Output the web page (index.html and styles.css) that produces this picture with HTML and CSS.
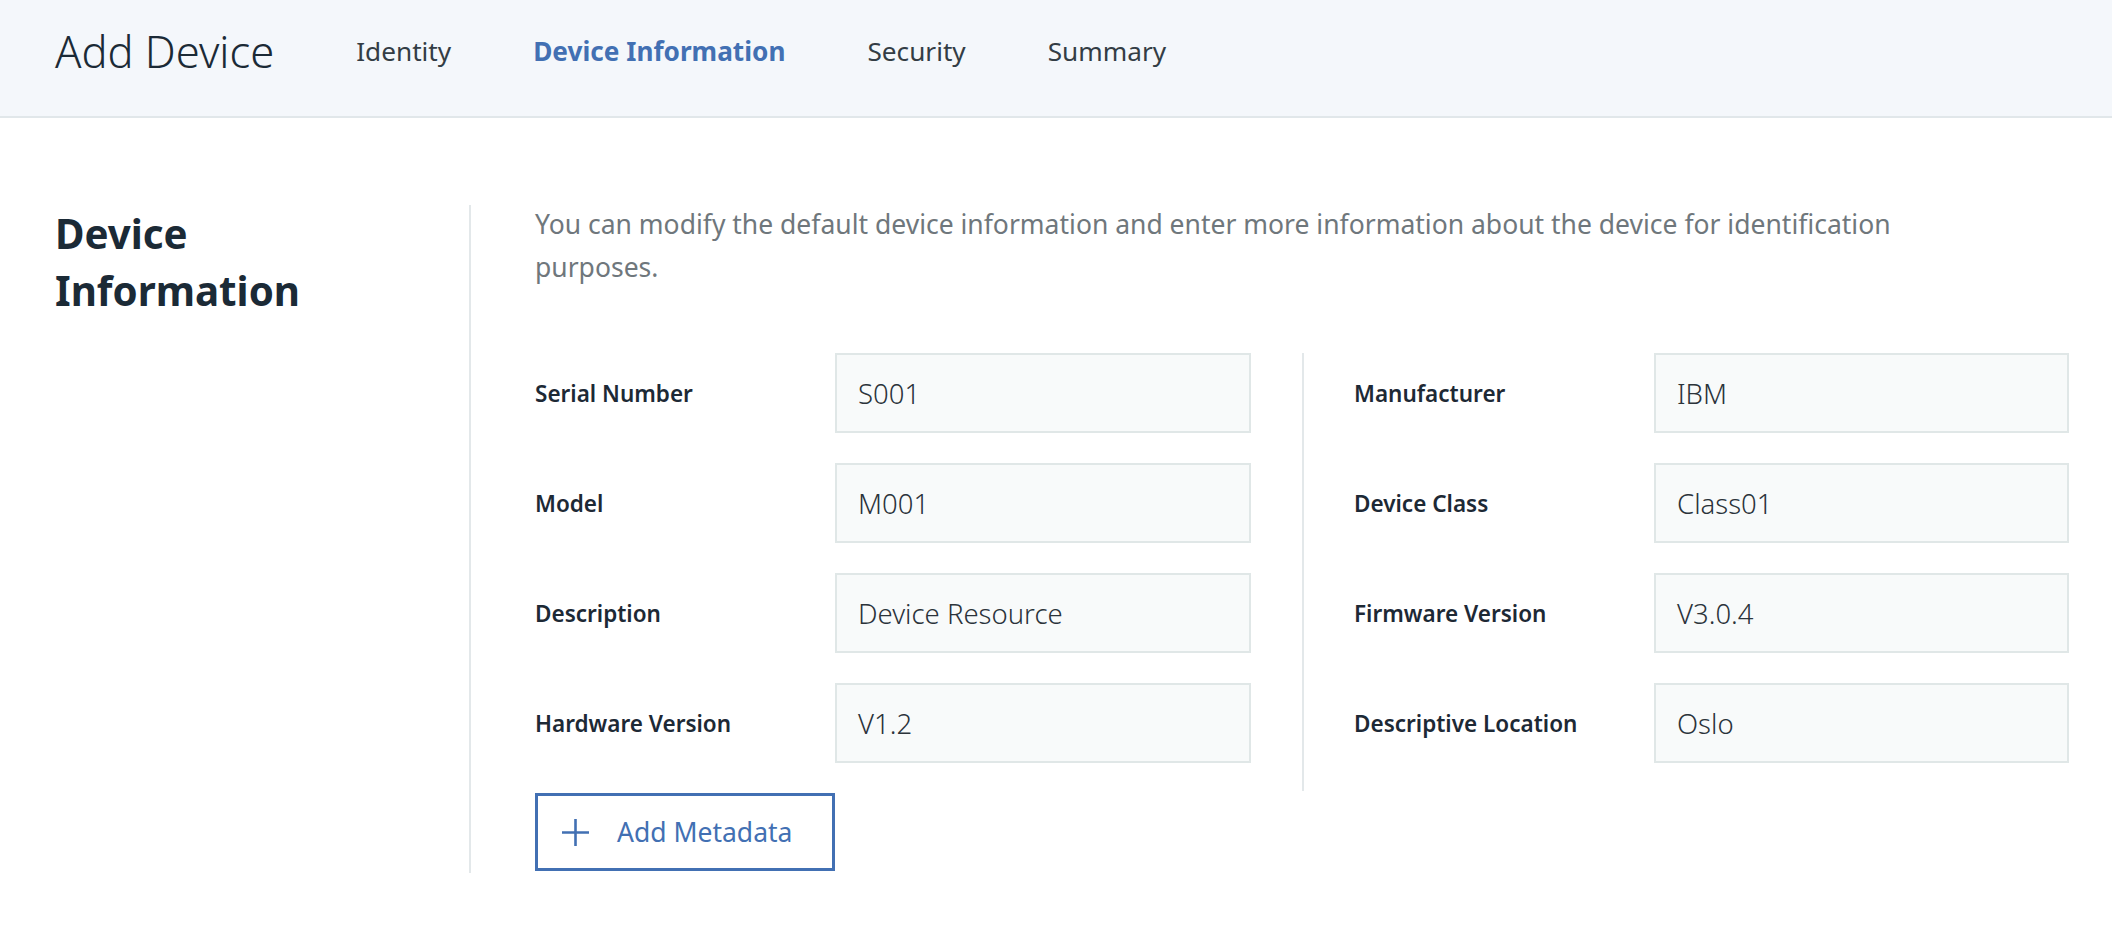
FILE: index.html
```html
<!DOCTYPE html>
<html lang="en">
<head>
<meta charset="utf-8">
<title>Add Device</title>
<link rel="stylesheet" href="styles.css">
</head>
<body>
<header class="topbar">
  <h1 class="topbar-title">Add Device</h1>
  <nav class="steps">
    <span class="step">Identity</span>
    <span class="step step-active">Device Information</span>
    <span class="step">Security</span>
    <span class="step">Summary</span>
  </nav>
</header>
<main class="page">
  <h2 class="section-title">Device Information</h2>
  <section class="content">
    <p class="intro">You can modify the default device information and enter more information about the device for identification purposes.</p>
    <div class="form">
      <div class="col col-left">
        <div class="row"><label class="label">Serial Number</label><div class="field">S001</div></div>
        <div class="row"><label class="label">Model</label><div class="field">M001</div></div>
        <div class="row"><label class="label">Description</label><div class="field">Device Resource</div></div>
        <div class="row"><label class="label">Hardware Version</label><div class="field">V1.2</div></div>
        <button class="add-btn" type="button">
          <svg class="plus" width="27" height="27" viewBox="0 0 27 27" aria-hidden="true"><path d="M13.5 0v27M0 13.5h27" stroke="currentColor" stroke-width="2.6" fill="none"/></svg>
          <span>Add Metadata</span>
        </button>
      </div>
      <div class="col col-right">
        <div class="row"><label class="label">Manufacturer</label><div class="field">IBM</div></div>
        <div class="row"><label class="label">Device Class</label><div class="field">Class01</div></div>
        <div class="row"><label class="label">Firmware Version</label><div class="field">V3.0.4</div></div>
        <div class="row"><label class="label">Descriptive Location</label><div class="field">Oslo</div></div>
      </div>
    </div>
  </section>
</main>
</body>
</html>
```

FILE: styles.css
```css
* { box-sizing: border-box; }
body {
  margin: 0;
  font-family: "Noto Sans", "Open Sans", sans-serif;
  color: #1b2a36;
  background: #ffffff;
}
.topbar {
  height: 118px;
  background: #f4f7fb;
  border-bottom: 2px solid #e1e7ea;
  display: flex;
  align-items: flex-start;
  padding: 27px 55px 0;
}
.topbar-title {
  margin: 0 82px 0 0;
  font-size: 43.5px;
  font-weight: 300;
  line-height: 48px;
  color: #1b2a36;
}
.steps {
  display: flex;
  gap: 82px;
  line-height: 48px;
}
.step {
  font-size: 26.2px;
  font-weight: 400;
  color: #333d45;
}
.step-active {
  font-weight: 700;
  color: #4270b3;
}
.page {
  display: flex;
  padding: 87px 43px 0 55px;
}
.section-title {
  width: 414px;
  flex: none;
  margin: 0;
  padding-right: 120px;
  font-size: 40.3px;
  line-height: 57px;
  font-weight: 700;
  color: #1b2a36;
}
.content {
  flex: 1;
  border-left: 2px solid #e3e8ea;
  padding-left: 64px;
  padding-bottom: 2px;
}
.intro {
  margin: -2px 0 0;
  max-width: 1420px;
  font-size: 26.5px;
  line-height: 43px;
  color: #6f777c;
}
.form {
  display: flex;
  align-items: flex-start;
  margin-top: 64px;
}
.col {
  display: flex;
  flex-direction: column;
  gap: 30px;
}
.col-left {
  width: 716px;
  margin-right: 51px;
}
.col-right {
  width: 767px;
  border-left: 2px solid #e3e8ea;
  padding-left: 50px;
  padding-bottom: 28px;
}
.row {
  display: flex;
  align-items: center;
}
.label {
  width: 300px;
  flex: none;
  font-size: 22.5px;
  font-weight: 600;
  color: #1d2935;
}
.field {
  width: 416px;
  height: 80px;
  display: flex;
  align-items: center;
  padding-left: 21px;
  background: #f8fafa;
  border: 2px solid #e0e7e7;
  font-size: 27.5px;
  font-weight: 300;
  color: #2b333a;
}
.add-btn {
  width: 300px;
  height: 78px;
  display: flex;
  align-items: center;
  gap: 28px;
  padding: 0 0 0 24px;
  background: #ffffff;
  border: 3px solid #4270b3;
  color: #4270b3;
  font-family: inherit;
  font-size: 26.5px;
  font-weight: 400;
  cursor: pointer;
}
.plus { flex: none; }
```
